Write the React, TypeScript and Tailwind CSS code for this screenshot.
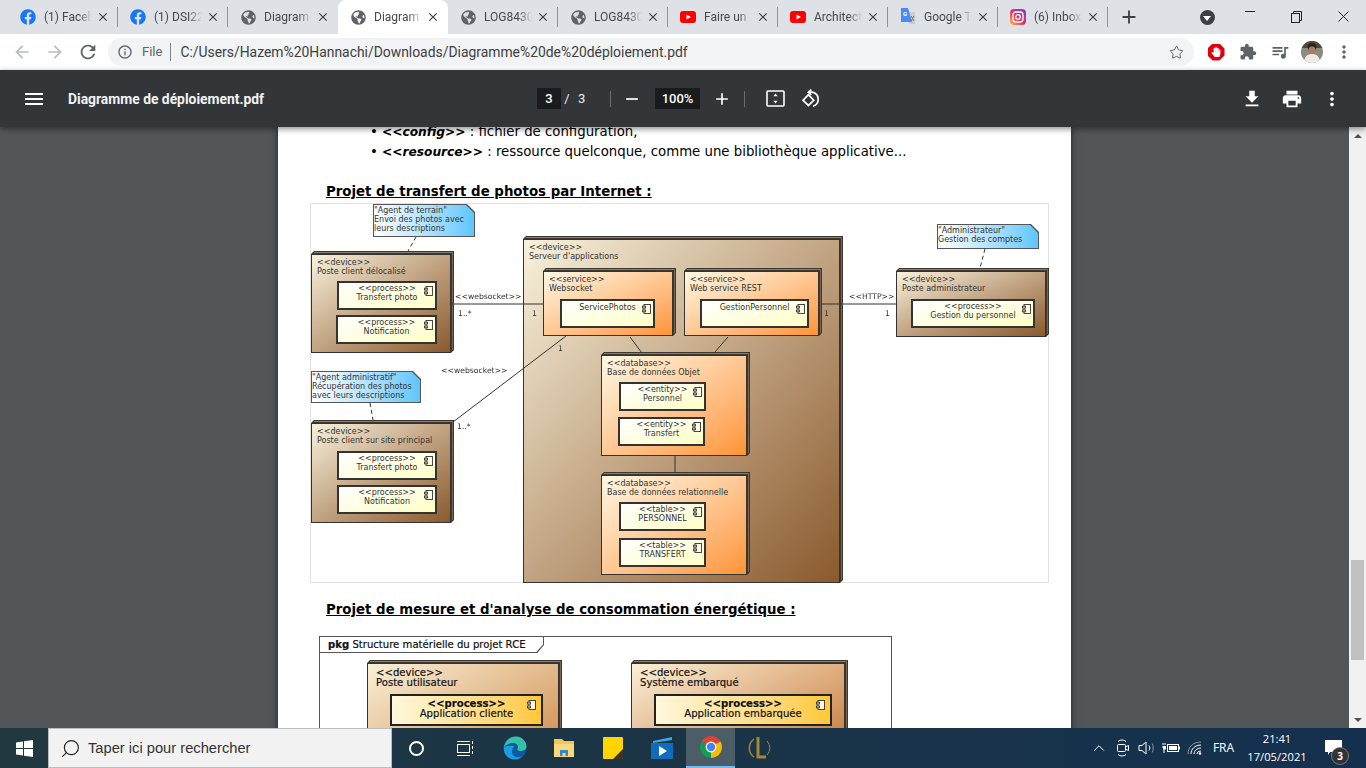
import React from 'react';
import { Star, Search, ChevronUp } from 'lucide-react';
import { FaFacebook, FaGlobeAmericas, FaHandPaper } from 'react-icons/fa';
import {
  MdAdd, MdArrowBack, MdArrowForward, MdClose, MdExtension, MdFileDownload, MdInfoOutline,
  MdMenu, MdMoreVert, MdPrint, MdQueueMusic, MdRefresh, MdRemove,
} from 'react-icons/md';

const YoutubeIcon = () => (
  <svg width="16" height="16" viewBox="0 0 16 16">
    <rect x="0" y="2" width="16" height="12" rx="3" fill="#f00" />
    <path d="M6.5 5.5 11 8l-4.5 2.5z" fill="#fff" />
  </svg>
);

const TranslateIcon = () => (
  <svg width="16" height="18" viewBox="0 0 16 18">
    <path d="M6 4h9v12H9z" fill="#c9ccd1" />
    <path d="M1 0h7l4 14H1z" fill="#4a8af4" />
    <text x="3" y="8" fontSize="6" fontWeight="700" fill="#fff" fontFamily="Roboto, sans-serif">G</text>
    <path d="M11 8l3 5M14 8l-3 5" stroke="#777" strokeWidth="1" />
  </svg>
);

const InstagramIcon = () => (
  <svg width="16" height="16" viewBox="0 0 16 16">
    <defs>
      <linearGradient id="ig" x1="0" y1="1" x2="1" y2="0">
        <stop offset="0" stopColor="#fdc04f" />
        <stop offset="0.45" stopColor="#e8325f" />
        <stop offset="1" stopColor="#6a45d0" />
      </linearGradient>
    </defs>
    <rect width="16" height="16" rx="4" fill="url(#ig)" />
    <rect x="3" y="3" width="10" height="10" rx="3" fill="none" stroke="#fff" strokeWidth="1.3" />
    <circle cx="8" cy="8" r="2.3" fill="none" stroke="#fff" strokeWidth="1.3" />
  </svg>
);

type TabData = { title: string; icon: string; sep: boolean; active?: boolean };

const TABS: TabData[] = [
  { title: '(1) Faceb', icon: 'fb', sep: true },
  { title: '(1) DSI22', icon: 'fb', sep: true },
  { title: 'Diagram', icon: 'globe', sep: false },
  { title: 'Diagram', icon: 'globe', sep: false, active: true },
  { title: 'LOG8430', icon: 'globe', sep: true },
  { title: 'LOG8430', icon: 'globe', sep: true },
  { title: 'Faire un', icon: 'yt', sep: true },
  { title: 'Architect', icon: 'yt', sep: true },
  { title: 'Google T', icon: 'tr', sep: true },
  { title: '(6) Inbox', icon: 'ig', sep: true },
];

const TabIcon = ({ name }: { name: string }) => {
  if (name === 'fb') return <FaFacebook size={16} className="text-[#1877f2]" />;
  if (name === 'globe') return <FaGlobeAmericas size={15} className="text-[#5f6368]" />;
  if (name === 'yt') return <YoutubeIcon />;
  if (name === 'tr') return <TranslateIcon />;
  return <InstagramIcon />;
};

const Tab = ({ tab }: { tab: TabData }) => (
  <div className={`relative flex h-[34px] w-[110px] items-center pl-3 ${tab.active ? 'rounded-t-lg bg-white' : ''}`}>
    <div className="flex w-4 justify-center"><TabIcon name={tab.icon} /></div>
    <span className="ml-2 w-[48px] overflow-hidden whitespace-nowrap text-[12px] text-[#45494d] [mask-image:linear-gradient(to_right,black_72%,transparent)]">
      {tab.title}
    </span>
    <MdClose size={14} className="ml-[4px] text-[#3c4043]" />
    {tab.sep && <div className="absolute top-[7px] right-0 h-[20px] w-px bg-[#8f9399]" />}
  </div>
);

const TabStrip = () => (
  <div className="flex h-[34px] items-center bg-[#dee1e6] pl-2">
    {TABS.map((t, i) => <Tab key={i} tab={t} />)}
    <div className="flex w-[42px] justify-center"><MdAdd size={22} className="text-[#3c4043]" /></div>
    <div className="ml-[43px] flex w-[28px] justify-center">
      <div className="flex h-[15px] w-[15px] items-center justify-center rounded-full bg-[#3c4043]">
        <div className="mt-[2px] h-0 w-0 border-x-[4px] border-t-[5px] border-x-transparent border-t-white" />
      </div>
    </div>
    <div className="ml-auto flex">
      <div className="flex w-[46px] justify-center"><div className="h-px w-[10px] bg-[#222]" /></div>
      <div className="flex w-[47px] justify-center">
        <svg width="11" height="12" viewBox="0 0 11 12" fill="none" stroke="#222">
          <rect x="0.5" y="2.5" width="8" height="9" />
          <path d="M2.5 2.5v-2h8v9h-2" />
        </svg>
      </div>
      <div className="flex w-[46px] justify-center">
        <svg width="11" height="11" viewBox="0 0 11 11" stroke="#222"><path d="M0.5 0.5l10 10M10.5 0.5l-10 10" /></svg>
      </div>
    </div>
  </div>
);

const AddressBar = () => (
  <div className="flex h-[36px] items-center bg-white pl-[5px]">
    <div className="flex w-[33px] justify-center"><MdArrowBack size={20} className="text-[#b9bcc0]" /></div>
    <div className="flex w-[33px] justify-center"><MdArrowForward size={20} className="text-[#b9bcc0]" /></div>
    <div className="flex w-[33px] justify-center"><MdRefresh size={22} className="text-[#5f6368]" /></div>
    <div className="ml-[4px] flex h-[28px] w-[1086px] items-center rounded-full bg-[#f1f3f4] text-[13px]">
      <MdInfoOutline size={16} className="ml-[9px] text-[#5f6368]" />
      <span className="ml-[9px] text-[#5f6368]">File</span>
      <div className="ml-[8px] h-[18px] w-px bg-[#80868b]" />
      <span className="ml-[9px] text-[13.9px] text-[#3c4043]">C:/Users/Hazem%20Hannachi/Downloads/Diagramme%20de%20déploiement.pdf</span>
      <Star size={15} strokeWidth={1.6} className="ml-auto mr-[10px] text-[#5f6368]" />
    </div>
    <div className="ml-[6px] flex w-[32px] justify-center">
      <div className="flex h-[17px] w-[17px] items-center justify-center bg-[#e0000f] [clip-path:polygon(30%_0,70%_0,100%_30%,100%_70%,70%_100%,30%_100%,0_70%,0_30%)]">
        <FaHandPaper size={10} className="text-white" />
      </div>
    </div>
    <div className="flex w-[32px] justify-center"><MdExtension size={18} className="text-[#5f6368]" /></div>
    <div className="flex w-[32px] justify-center"><MdQueueMusic size={20} className="text-[#5f6368]" /></div>
    <div className="flex w-[32px] justify-center">
      <svg width="22" height="22" viewBox="0 0 22 22">
        <defs><clipPath id="av"><circle cx="11" cy="11" r="11" /></clipPath></defs>
        <g clipPath="url(#av)">
          <rect width="22" height="22" fill="#8d8a80" />
          <rect width="22" height="7" fill="#4e4a40" />
          <ellipse cx="11" cy="6" rx="4.5" ry="4" fill="#2a2320" />
          <circle cx="11" cy="9" r="3.4" fill="#a97c5f" />
          <path d="M3 22c0-6 3-9 8-9s8 3 8 9z" fill="#eceae4" />
        </g>
      </svg>
    </div>
    <div className="flex w-[32px] justify-center"><MdMoreVert size={20} className="text-[#5f6368]" /></div>
  </div>
);

const PdfToolbar = () => (
  <div className="relative z-10 flex h-[57px] items-center bg-[#323639] text-white shadow-[0_2px_6px_rgba(0,0,0,0.45)]">
    <MdMenu size={24} className="ml-[22px]" />
    <div className="ml-[22px] mt-px w-[469px] text-[13.85px] font-bold text-[#f1f3f4]">Diagramme de déploiement.pdf</div>
    <div className="flex h-[21px] w-[24px] items-center justify-center bg-[#191b1c] text-[13px] font-medium">3</div>
    <span className="w-[12px] text-center text-[13px] text-[#e8eaed]">/</span>
    <span className="ml-[5px] w-[10px] text-[13px] text-[#e8eaed]">3</span>
    <div className="ml-[22px] h-[16px] w-px bg-[#6b6e71]" />
    <div className="ml-[9px] flex w-[24px] justify-center"><MdRemove size={20} /></div>
    <div className="ml-[11px] flex h-[21px] w-[45px] items-center justify-center bg-[#191b1c] text-[13px] font-medium">100%</div>
    <div className="ml-[10px] flex w-[24px] justify-center"><MdAdd size={20} /></div>
    <div className="ml-[10px] h-[16px] w-px bg-[#6b6e71]" />
    <div className="ml-[18px] flex w-[24px] justify-center">
      <svg width="19" height="17" viewBox="0 0 19 17" fill="none">
        <rect x="1" y="1" width="17" height="15" rx="1" stroke="#fff" strokeWidth="1.6" />
        <path d="M9.5 3.5l2.2 2.8H7.3zM9.5 13.5l2.2-2.8H7.3z" fill="#fff" />
      </svg>
    </div>
    <div className="ml-[12px] flex w-[24px] justify-center">
      <svg width="20" height="20" viewBox="0 0 20 20" fill="none" stroke="#fff" strokeWidth="1.7">
        <path d="M8 3.2h3.2a7.2 7.2 0 0 1 .8 14" />
        <path d="M10.3 0.6 7.4 3.2l2.9 2.6" />
        <rect x="3.6" y="7.4" width="7.6" height="7.6" transform="rotate(45 7.4 11.2)" />
      </svg>
    </div>
    <div className="ml-auto flex w-[24px] justify-center"><MdFileDownload size={22} /></div>
    <div className="ml-[16px] flex w-[24px] justify-center"><MdPrint size={22} /></div>
    <div className="ml-[16px] mr-[22px] flex w-[24px] justify-center"><MdMoreVert size={22} /></div>
  </div>
);

const ComponentGlyph = ({ className }: { className: string }) => (
  <svg className={`absolute ${className}`} width="9" height="10" viewBox="0 0 9 10" fill="#fff8e0" stroke="#333" strokeWidth="0.9">
    <rect x="2" y="0.5" width="6.5" height="9" />
    <rect x="0.5" y="2.2" width="3" height="1.8" />
    <rect x="0.5" y="6" width="3" height="1.8" />
  </svg>
);

const Box = ({ lines, className }: { lines: string[]; className: string }) => (
  <div className={`relative border-2 border-[#333] bg-linear-to-br from-white to-[#ffffc4] text-center leading-[8.5px] ${lines.length === 1 ? 'pt-[3px]' : 'pt-[2px]'} ${className}`}>
    {lines.map(l => <div key={l}>{l}</div>)}
    <ComponentGlyph className="top-[3px] right-[2px]" />
  </div>
);

type NodeProps = { pos: string; grad: string; lines: string[]; labelClass?: string; children?: React.ReactNode };

const Node = ({ pos, grad, lines, labelClass = 'h-[17px] leading-[8.5px]', children }: NodeProps) => (
  <div className={`absolute ${pos} bg-[#3d3830] pt-[3px] pr-[3px] [clip-path:polygon(3px_0,100%_0,100%_calc(100%-3px),calc(100%-3px)_100%,0_100%,0_3px)]`}>
    <div className="absolute top-px right-px left-[3px] h-px bg-[#8d7d66]" />
    <div className="absolute top-px right-px bottom-[3px] w-px bg-[#7a6650]" />
    <div className={`h-full w-full border border-[#333] pl-[6px] pt-[4px] ${grad}`}>
      <div className={`-ml-px ${labelClass}`}>
        {lines.map(l => <div key={l}>{l}</div>)}
      </div>
      {children}
    </div>
  </div>
);

const Note = ({ pos, lines }: { pos: string; lines: string[] }) => (
  <div className={`absolute ${pos} bg-[#555] p-px [clip-path:polygon(0_0,calc(100%-8px)_0,100%_8px,100%_100%,0_100%)]`}>
    <div className="h-full w-full bg-linear-to-r from-white to-[#5cc6fb] pt-px [clip-path:polygon(0_0,calc(100%-8px)_0,100%_8px,100%_100%,0_100%)]">
      {lines.map(l => <div key={l}>{l}</div>)}
    </div>
  </div>
);

const Tag = ({ text, pos }: { text: string; pos: string }) => (
  <span className={`absolute whitespace-nowrap text-[7.7px] ${pos}`}>{text}</span>
);

const BROWN = 'bg-linear-to-br from-[#f8f2dc] to-[#8a5a2c]';
const ORANGE = 'bg-linear-to-br from-[#fff8e4] to-[#ff9430]';

const TransferDiagram = () => (
  <div className="relative ml-[32px] h-[380px] w-[739px] border border-[#e2e2e2] font-['DejaVu_Sans',sans-serif] text-[8px] leading-[9px] text-[#333] blur-[0.3px]">
    <Note pos="left-[62px] top-[0px] h-[33px] w-[102px]" lines={['"Agent de terrain"', 'Envoi des photos avec', 'leurs descriptions']} />
    <Note pos="left-[0px] top-[167px] h-[32px] w-[110px]" lines={['"Agent administratif"', 'Récupération des photos', 'avec leurs descriptions']} />
    <Note pos="left-[626px] top-[20px] h-[25px] w-[102px]" lines={['"Administrateur"', 'Gestion des comptes']} />

    <Node pos="left-[0px] top-[47px] h-[102px] w-[143px]" grad={BROWN} lines={['<<device>>', 'Poste client délocalisé']}>
      <Box className="ml-[19px] mt-[5px] h-[29px] w-[100px]" lines={['<<process>>', 'Transfert photo']} />
      <Box className="ml-[18px] mt-[5px] h-[29px] w-[101px]" lines={['<<process>>', 'Notification']} />
    </Node>
    <Node pos="left-[0px] top-[216px] h-[103px] w-[143px]" grad={BROWN} lines={['<<device>>', 'Poste client sur site principal']}>
      <Box className="ml-[19px] mt-[6px] h-[29px] w-[100px]" lines={['<<process>>', 'Transfert photo']} />
      <Box className="ml-[19px] mt-[5px] h-[29px] w-[100px]" lines={['<<process>>', 'Notification']} />
    </Node>
    <Node pos="left-[585px] top-[64px] h-[69px] w-[153px]" grad={BROWN} lines={['<<device>>', 'Poste administrateur']}>
      <Box className="ml-[8px] mt-[6px] h-[29px] w-[124px]" lines={['<<process>>', 'Gestion du personnel']} />
    </Node>
    <Node pos="left-[212px] top-[32px] h-[347px] w-[320px]" grad={BROWN} lines={['<<device>>', "Serveur d'applications"]} />
    <Node pos="left-[232px] top-[64px] h-[68px] w-[133px]" grad={ORANGE} lines={['<<service>>', 'Websocket']}>
      <Box className="ml-[10px] mt-[6px] h-[29px] w-[95px]" lines={['ServicePhotos']} />
    </Node>
    <Node pos="left-[373px] top-[64px] h-[68px] w-[138px]" grad={ORANGE} lines={['<<service>>', 'Web service REST']}>
      <Box className="ml-[9px] mt-[6px] h-[29px] w-[109px]" lines={['GestionPersonnel']} />
    </Node>
    <Node pos="left-[290px] top-[148px] h-[104px] w-[149px]" grad={ORANGE} lines={['<<database>>', 'Base de données Objet']}>
      <Box className="ml-[11px] mt-[5px] h-[29px] w-[87px]" lines={['<<entity>>', 'Personnel']} />
      <Box className="ml-[10px] mt-[6px] h-[29px] w-[87px]" lines={['<<entity>>', 'Transfert']} />
    </Node>
    <Node pos="left-[290px] top-[268px] h-[103px] w-[149px]" grad={ORANGE} lines={['<<database>>', 'Base de données relationnelle']}>
      <Box className="ml-[11px] mt-[5px] h-[29px] w-[87px]" lines={['<<table>>', 'PERSONNEL']} />
      <Box className="ml-[11px] mt-[7px] h-[29px] w-[87px]" lines={['<<table>>', 'TRANSFERT']} />
    </Node>

    <svg className="absolute inset-0 h-full w-full" fill="none" stroke="#333">
      <path d="M140 100H232M511 100H585M255 132 142 218M319 133 331 149M417 133 403 149M364 252V268" />
      <path d="M105 33 97 47M59 199 62 216M674 45 669 64" strokeDasharray="4 3" />
    </svg>

    <Tag text="<<websocket>>" pos="left-[144px] top-[88px]" />
    <Tag text="1..*" pos="left-[147px] top-[105px]" />
    <Tag text="1" pos="left-[221px] top-[105px]" />
    <Tag text="<<HTTP>>" pos="left-[538px] top-[88px]" />
    <Tag text="1" pos="left-[513px] top-[105px]" />
    <Tag text="1" pos="left-[574px] top-[105px]" />
    <Tag text="1" pos="left-[247px] top-[140px]" />
    <Tag text="<<websocket>>" pos="left-[130px] top-[162px]" />
    <Tag text="1..*" pos="left-[146px] top-[218px]" />
  </div>
);

const Process2 = ({ className, name }: { className: string; name: string }) => (
  <div className={`relative border-2 border-[#222] bg-linear-to-r from-[#fff8dc] to-[#ffc832] pt-[3px] text-center ${className}`}>
    <div className="font-bold">{'<<process>>'}</div>
    <div>{name}</div>
    <ComponentGlyph className="top-[4px] right-[5px]" />
  </div>
);

const ConsumptionDiagram = () => (
  <div className="relative ml-[41px] h-[200px] w-[573px] border border-[#555] font-['DejaVu_Sans',sans-serif] text-[10.1px] leading-[10px] text-[#111] [-webkit-text-stroke:0.2px_#111]">
    <div className="absolute top-0 left-0 z-10 flex h-[16px] w-[224px] items-center bg-[#555] pl-2 [clip-path:polygon(0_0,100%_0,100%_50%,97%_100%,0_100%)]">
      <div className="absolute inset-0 right-px bottom-px bg-white [clip-path:polygon(0_0,100%_0,100%_50%,97%_100%,0_100%)]" />
      <span className="relative whitespace-nowrap"><b>pkg</b> Structure matérielle du projet RCE</span>
    </div>
    <Node pos="left-[47px] top-[23px] h-[110px] w-[195px]" grad="bg-linear-to-br from-[#faf0d8] to-[#c9853c]" lines={['<<device>>', 'Poste utilisateur']} labelClass="ml-[2px] h-[19px] leading-[10px]">
      <Process2 className="ml-[16px] mt-[7px] h-[32px] w-[153px]" name="Application cliente" />
    </Node>
    <Node pos="left-[311px] top-[23px] h-[110px] w-[217px]" grad="bg-linear-to-br from-[#faf0d8] to-[#c06f20]" lines={['<<device>>', 'Système embarqué']} labelClass="ml-[2px] h-[19px] leading-[10px]">
      <Process2 className="ml-[16px] mt-[7px] h-[32px] w-[178px]" name="Application embarquée" />
    </Node>
  </div>
);

const PdfPage = () => (
  <div className="ml-[278px] h-[760px] w-[793px] bg-white shadow-[0_0_7px_rgba(0,0,0,0.6)] font-['DejaVu_Sans',sans-serif] text-black">
    <div className="-mt-[5px] pl-[92px] text-[13.3px] leading-[20px]">
      <div>• <b className="text-[12.2px]"><i>&lt;&lt;config&gt;&gt;</i></b> : fichier de configuration,</div>
      <div>• <b className="text-[12.2px]"><i>&lt;&lt;resource&gt;&gt;</i></b> : ressource quelconque, comme une bibliothèque applicative...</div>
    </div>
    <div className="mt-[20px] ml-[48px] text-[13.33px] font-bold leading-[20px] underline">Projet de transfert de photos par Internet :</div>
    <div className="mt-px"><TransferDiagram /></div>
    <div className="mt-[17px] ml-[48px] text-[13.33px] font-bold leading-[20px] underline">Projet de mesure et d'analyse de consommation énergétique :</div>
    <div className="mt-[16px]"><ConsumptionDiagram /></div>
  </div>
);

const Scrollbar = () => (
  <div className="ml-auto flex h-full w-[17px] flex-col items-center bg-[#f1f1f1]">
    <div className="flex h-[17px] w-full items-center justify-center">
      <div className="h-0 w-0 border-x-[4px] border-b-[4px] border-x-transparent border-b-[#505050]" />
    </div>
    <div className="mt-[416px] h-[100px] w-[13px] bg-[#c1c1c1]" />
    <div className="flex-1" />
    <div className="flex h-[17px] w-full items-center justify-center">
      <div className="h-0 w-0 border-x-[4px] border-t-[4px] border-x-transparent border-t-[#505050]" />
    </div>
  </div>
);

const ChromeIcon = () => (
  <svg width="24" height="24" viewBox="0 0 24 24">
    <path d="M12 12 2.5 6.5A11 11 0 0 1 21.5 6.5Z" fill="#db4437" />
    <path d="M12 12 21.5 6.5A11 11 0 0 1 12 23Z" fill="#fbbc05" />
    <path d="M12 12V23A11 11 0 0 1 2.5 6.5Z" fill="#0f9d58" />
    <circle cx="12" cy="12" r="5.4" fill="#fff" />
    <circle cx="12" cy="12" r="4.2" fill="#4285f4" />
  </svg>
);

const EdgeIcon = () => (
  <svg width="24" height="24" viewBox="0 0 24 24">
    <circle cx="12" cy="12" r="11.5" fill="#0c59a4" />
    <path d="M1 11C2 5 7 .5 13 .5c6 0 10.500 5 10.500 10 0 3-3 4.500-6 4.500-2 0-4-1-3-2 1.500-2 0-6-4-6-3 0-7 1-9.500 4z" fill="#35c1a8" />
    <path d="M1 11c-1 7 4 12.500 11 12.500 3 0 5-1 7-3-5 2-10 0-10-5 0-2 1-4 2.500-5.500-4 0-8 0-10.500 1z" fill="#1b9de2" />
  </svg>
);

const ExplorerIcon = () => (
  <svg width="24" height="24" viewBox="0 0 24 24">
    <path d="M2 3h8l2 2h10v16H2z" fill="#f2c55c" />
    <path d="M2 8h20v13H2z" fill="#fbd97a" />
    <path d="M8 20v-6h8v6h-2.500v-3h-3v3z" fill="#2a8ad4" />
  </svg>
);

const StickyIcon = () => (
  <svg width="22" height="24" viewBox="0 0 22 24">
    <rect x="1" y="1" width="20" height="22" rx="1" fill="#ffd500" />
    <path d="M21 13v9a1 1 0 0 1-1 1h-9z" fill="#3a3320" />
  </svg>
);

const MoviesIcon = () => (
  <svg width="24" height="24" viewBox="0 0 24 24">
    <rect x="1" y="7" width="22" height="16" fill="#0f6cbd" />
    <path d="M3 5 22 1v3L3 7z" fill="#39a7e8" />
    <path d="M9 10l8 5-8 5z" fill="#fff" />
  </svg>
);

const LeagueIcon = () => (
  <svg width="24" height="28" viewBox="0 0 24 28" fill="none" stroke="#a98436">
    <path d="M6 5a11 11 0 0 0 0 18" strokeWidth="1.5" />
    <path d="M19 7a10 10 0 0 1 0 14" strokeWidth="1" />
    <path d="M10 3v20h8" strokeWidth="3" />
  </svg>
);

const Taskbar = () => (
  <div className="flex h-[40px] items-center bg-linear-to-r from-[#20383f] to-[#14304e] font-['Open_Sans',sans-serif] text-white">
    <div className="flex h-full w-[48px] items-center justify-center">
      <svg width="17" height="17" viewBox="0 0 17 17" fill="#fff">
        <path d="M0 2.400 7 1.400V8H0zM8 1.200 17 0v8H8zM0 9h7v6.600L0 14.600zM8 9h9v8l-9-1.200z" />
      </svg>
    </div>
    <div className="flex h-full w-[344px] items-center border border-[#b9bdc0] bg-[#f2f2f2] pl-[11px] text-[14.7px] text-[#333]">
      <Search size={21} strokeWidth={1.3} className="-scale-x-100 text-[#222]" />
      <span className="ml-[7px] mt-px font-['Liberation_Sans',sans-serif]">Taper ici pour rechercher</span>
    </div>
    <div className="flex h-full w-[49px] items-center justify-center">
      <div className="h-[15px] w-[15px] rounded-full border-2 border-white" />
    </div>
    <div className="flex h-full w-[49px] items-center justify-center">
      <svg width="17" height="17" viewBox="0 0 17 17" fill="none" stroke="#fff">
        <rect x="0.500" y="4.500" width="12" height="8" />
        <path d="M0 1.500h13M0 15.500h13M15.500 1v3M15.500 6v3M15.500 11v3" />
      </svg>
    </div>
    <div className="flex h-full w-[49px] items-center justify-center"><EdgeIcon /></div>
    <div className="flex h-full w-[49px] items-center justify-center"><ExplorerIcon /></div>
    <div className="flex h-full w-[49px] items-center justify-center"><StickyIcon /></div>
    <div className="flex h-full w-[49px] items-center justify-center"><MoviesIcon /></div>
    <div className="flex h-full w-[49px] items-center justify-center border-b-2 border-b-[#76b9ed] bg-[#4b5d67]"><ChromeIcon /></div>
    <div className="flex h-full w-[49px] items-center justify-center"><LeagueIcon /></div>

    <div className="ml-auto flex h-full items-center">
      <div className="flex w-[24px] justify-center"><ChevronUp size={18} strokeWidth={1.3} /></div>
      <div className="flex w-[24px] justify-center">
        <svg width="16" height="18" viewBox="0 0 16 18" fill="none" stroke="#fff">
          <rect x="2.500" y="5.500" width="8" height="7" rx="1" />
          <path d="M10.500 8l3-1.500v5l-3-1.500M3 2.500c2-2 6-2 8 0M3 15.500c2 2 6 2 8 0" />
        </svg>
      </div>
      <div className="flex w-[24px] justify-center">
        <svg width="18" height="16" viewBox="0 0 18 16" fill="none" stroke="#fff">
          <path d="M1 5.500h3L8 2v12l-4-3.500H1z" />
          <path d="M11 5.500c1 1.500 1 3.500 0 5" />
          <path d="M14 3.500c1.700 2.500 1.700 6.500 0 9" stroke="#8a99a5" />
        </svg>
      </div>
      <div className="flex w-[24px] justify-center">
        <svg width="18" height="12" viewBox="0 0 18 12" fill="#fff">
          <path d="M0 2h4M0 5h4M2 7v4" stroke="#fff" fill="none" />
          <rect x="1" y="4" width="3" height="3.500" />
          <rect x="5.500" y="2.500" width="11" height="7" fill="none" stroke="#fff" />
          <rect x="7" y="4" width="8" height="4" />
          <rect x="17" y="4.500" width="1" height="3" />
        </svg>
      </div>
      <div className="flex w-[24px] justify-center">
        <svg width="16" height="14" viewBox="0 0 16 14" fill="none" stroke="#fff">
          <path d="M1 13C1 6 6 1 14 1" stroke="#8a99a5" />
          <path d="M4 13c0-5 4-9 10-9" />
          <path d="M7 13c0-3 3-6 7-6" />
          <path d="M10 13c0-1.500 1-3 4-3" />
          <circle cx="13" cy="12.500" r="1.300" fill="#fff" stroke="none" />
        </svg>
      </div>
      <div className="w-[33px] text-center text-[12px]">FRA</div>
      <div className="w-[74px] text-center text-[11.2px] leading-[18px]">
        <div>21:41</div>
        <div>17/05/2021</div>
      </div>
      <div className="relative flex h-full w-[38px] items-center justify-center">
        <svg width="17" height="15" viewBox="0 0 17 15" className="-mt-[2px]" fill="#fff">
          <path d="M0 0h17v12H5l-2 3v-3H0z" />
        </svg>
        <div className="absolute top-[20px] left-[18px] flex h-[16px] w-[16px] items-center justify-center rounded-full bg-[#333] text-[10px] font-bold ring-1 ring-[#777]">3</div>
      </div>
      <div className="w-[14px]" />
    </div>
  </div>
);

export default function App() {
  return (
    <div className="flex h-[768px] w-[1366px] flex-col overflow-hidden font-[Roboto,sans-serif]">
      <TabStrip />
      <AddressBar />
      <PdfToolbar />
      <div className="flex h-[601px] overflow-hidden bg-[#525659]">
        <PdfPage />
        <Scrollbar />
      </div>
      <Taskbar />
    </div>
  );
}
